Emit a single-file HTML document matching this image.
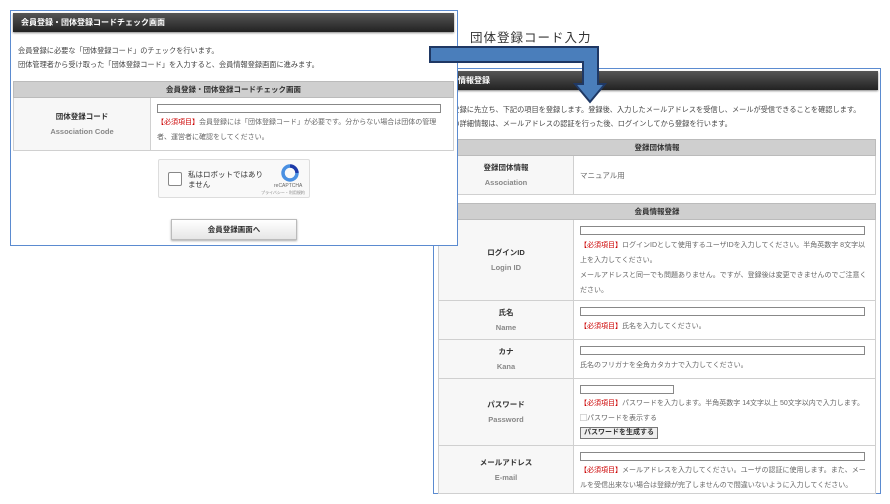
<!DOCTYPE html>
<html><head><meta charset="utf-8"><style>
*{margin:0;padding:0;box-sizing:border-box}
body{width:890px;height:504px;background:#fff;position:relative;overflow:hidden;font-family:"Liberation Sans","Noto Sans CJK JP",sans-serif;color:#333}
.a{position:absolute}
.win{position:absolute;background:#fff;border:1px solid #5b8bd0}
.hdr{position:absolute;height:19px;background:linear-gradient(#555,#222);color:#fff;font-size:8px;font-weight:bold;line-height:19px;padding-left:8px;box-shadow:0 1px 2px #888}
.t{font-size:7.2px;color:#444;white-space:nowrap}
.gh{position:absolute;height:17px;background:#cfcfcf;border:1px solid #bbb;font-size:7.5px;font-weight:bold;text-align:center;line-height:16px;color:#333}
.row{position:absolute;border:1px solid #d0d0d0;border-top:none;background:#fff}
.lab{position:absolute;left:0;top:0;bottom:0;background:#f7f7f7;border-right:1px solid #d0d0d0;text-align:center;font-size:7.5px;font-weight:bold;color:#333;display:flex;flex-direction:column;justify-content:center;line-height:15px}
.lab span{color:#888;font-weight:bold}
.inp{position:absolute;height:9px;border:1px solid #888;background:#fff}
.r{color:#c00}
.d{position:absolute;font-size:7px;color:#666;line-height:15px}
</style></head><body>

<!-- right window -->
<div class="win" style="left:433px;top:68px;width:448px;height:426px">
 <div class="hdr" style="left:0;top:2px;width:444px">会員情報登録</div>
 <div class="a t" style="left:4px;top:36px">会員登録に先立ち、下記の項目を登録します。登録後、入力したメールアドレスを受信し、メールが受信できることを確認します。</div>
 <div class="a t" style="left:4px;top:50px">会員の詳細情報は、メールアドレスの認証を行った後、ログインしてから登録を行います。</div>
 <div class="gh" style="left:4px;top:70px;width:438px">登録団体情報</div>
 <div class="row" style="left:4px;top:87px;width:438px;height:39px"><div class="lab" style="width:135px">登録団体情報<span>Association</span></div><div class="d" style="left:141px;top:12px;font-size:7.5px">マニュアル用</div></div>
 <div class="gh" style="left:4px;top:134px;width:438px">会員情報登録</div>
 <div class="row" style="left:4px;top:151px;width:438px;height:81px"><div class="lab" style="width:135px">ログインID<span>Login ID</span></div>
  <div class="inp" style="left:141px;top:6px;width:285px"></div>
  <div class="d" style="left:141px;top:18px;width:292px"><span class="r">【必須項目】</span>ログインIDとして使用するユーザIDを入力してください。半角英数字 8文字以上を入力してください。<br>メールアドレスと同一でも問題ありません。ですが、登録後は変更できませんのでご注意ください。</div></div>
 <div class="row" style="left:4px;top:232px;width:438px;height:39px"><div class="lab" style="width:135px">氏名<span>Name</span></div>
  <div class="inp" style="left:141px;top:6px;width:285px"></div><div class="d" style="left:141px;top:18px"><span class="r">【必須項目】</span>氏名を入力してください。</div></div>
 <div class="row" style="left:4px;top:271px;width:438px;height:39px"><div class="lab" style="width:135px">カナ<span>Kana</span></div>
  <div class="inp" style="left:141px;top:6px;width:285px"></div><div class="d" style="left:141px;top:18px">氏名のフリガナを全角カタカナで入力してください。</div></div>
 <div class="row" style="left:4px;top:310px;width:438px;height:67px"><div class="lab" style="width:135px">パスワード<span>Password</span></div>
  <div class="inp" style="left:141px;top:6px;width:94px"></div>
  <div class="d" style="left:141px;top:17px;white-space:nowrap"><span class="r">【必須項目】</span>パスワードを入力します。半角英数字 14文字以上 50文字以内で入力します。<br>▢パスワードを表示する</div>
  <div class="a" style="left:141px;top:48px;border:1px solid #777;background:#eee;font-size:7px;font-weight:bold;padding:0 3px;line-height:10px">パスワードを生成する</div></div>
 <div class="row" style="left:4px;top:377px;width:438px;height:48px"><div class="lab" style="width:135px">メールアドレス<span>E-mail</span></div>
  <div class="inp" style="left:141px;top:6px;width:285px"></div>
  <div class="d" style="left:141px;top:17px;width:292px"><span class="r">【必須項目】</span>メールアドレスを入力してください。ユーザの認証に使用します。また、メールを受信出来ない場合は登録が完了しませんので間違いないように入力してください。</div></div>
</div>

<div class="a" style="left:470px;top:27px;font-size:12.5px;color:#333;letter-spacing:1px">団体登録コード入力</div>

<!-- left window -->
<div class="win" style="left:10px;top:10px;width:448px;height:236px">
 <div class="hdr" style="left:2px;top:2px;width:441px">会員登録・団体登録コードチェック画面</div>
 <div class="a t" style="left:7px;top:35px">会員登録に必要な「団体登録コード」のチェックを行います。</div>
 <div class="a t" style="left:7px;top:49px">団体管理者から受け取った「団体登録コード」を入力すると、会員情報登録画面に進みます。</div>
 <div class="gh" style="left:2px;top:70px;width:441px">会員登録・団体登録コードチェック画面</div>
 <div class="row" style="left:2px;top:87px;width:441px;height:53px"><div class="lab" style="width:137px">団体登録コード<span>Association Code</span></div>
  <div class="inp" style="left:143px;top:6px;width:284px"></div>
  <div class="d" style="left:143px;top:17px;width:292px"><span class="r">【必須項目】</span>会員登録には「団体登録コード」が必要です。分からない場合は団体の管理者、運営者に確認をしてください。</div></div>
 <div class="a" style="left:147px;top:148px;width:152px;height:39px;border:1px solid #ddd;background:#f9f9f9;border-radius:2px">
  <div class="a" style="left:9px;top:12px;width:14px;height:14px;border:1px solid #888;background:#fff;border-radius:2px"></div>
  <div class="a" style="left:29px;top:10px;font-size:7.5px;color:#333;line-height:10px">私はロボットではあり<br>ません</div>
  <svg class="a" style="left:122px;top:4px" width="18" height="18"><path d="M9 2 A7 7 0 1 0 16 9" fill="none" stroke="#4a90e2" stroke-width="3.5"/><path d="M9 2 A7 7 0 0 1 16 9" fill="none" stroke="#1c3aa9" stroke-width="3.5"/></svg>
  <div class="a" style="left:115px;top:23px;font-size:5px;color:#666">reCAPTCHA</div>
  <div class="a" style="left:102px;top:30px;font-size:4px;color:#888">プライバシー・利用規約</div>
 </div>
 <div class="a" style="left:160px;top:208px;width:126px;height:21px;border:1px solid #bbb;background:linear-gradient(#fff,#e6e6e6);font-size:7.5px;font-weight:bold;text-align:center;line-height:20px;box-shadow:0 1px 2px #aaa">会員登録画面へ</div>
</div>

<!-- arrow -->
<svg class="a" style="left:0;top:0" width="890" height="504">
 <path d="M430 47 H598 V84 H605 L590 102 L575 84 H583 V62 H430 Z" fill="#4a7ebb" stroke="#1f3864" stroke-width="2"/>
</svg>
</body></html>
